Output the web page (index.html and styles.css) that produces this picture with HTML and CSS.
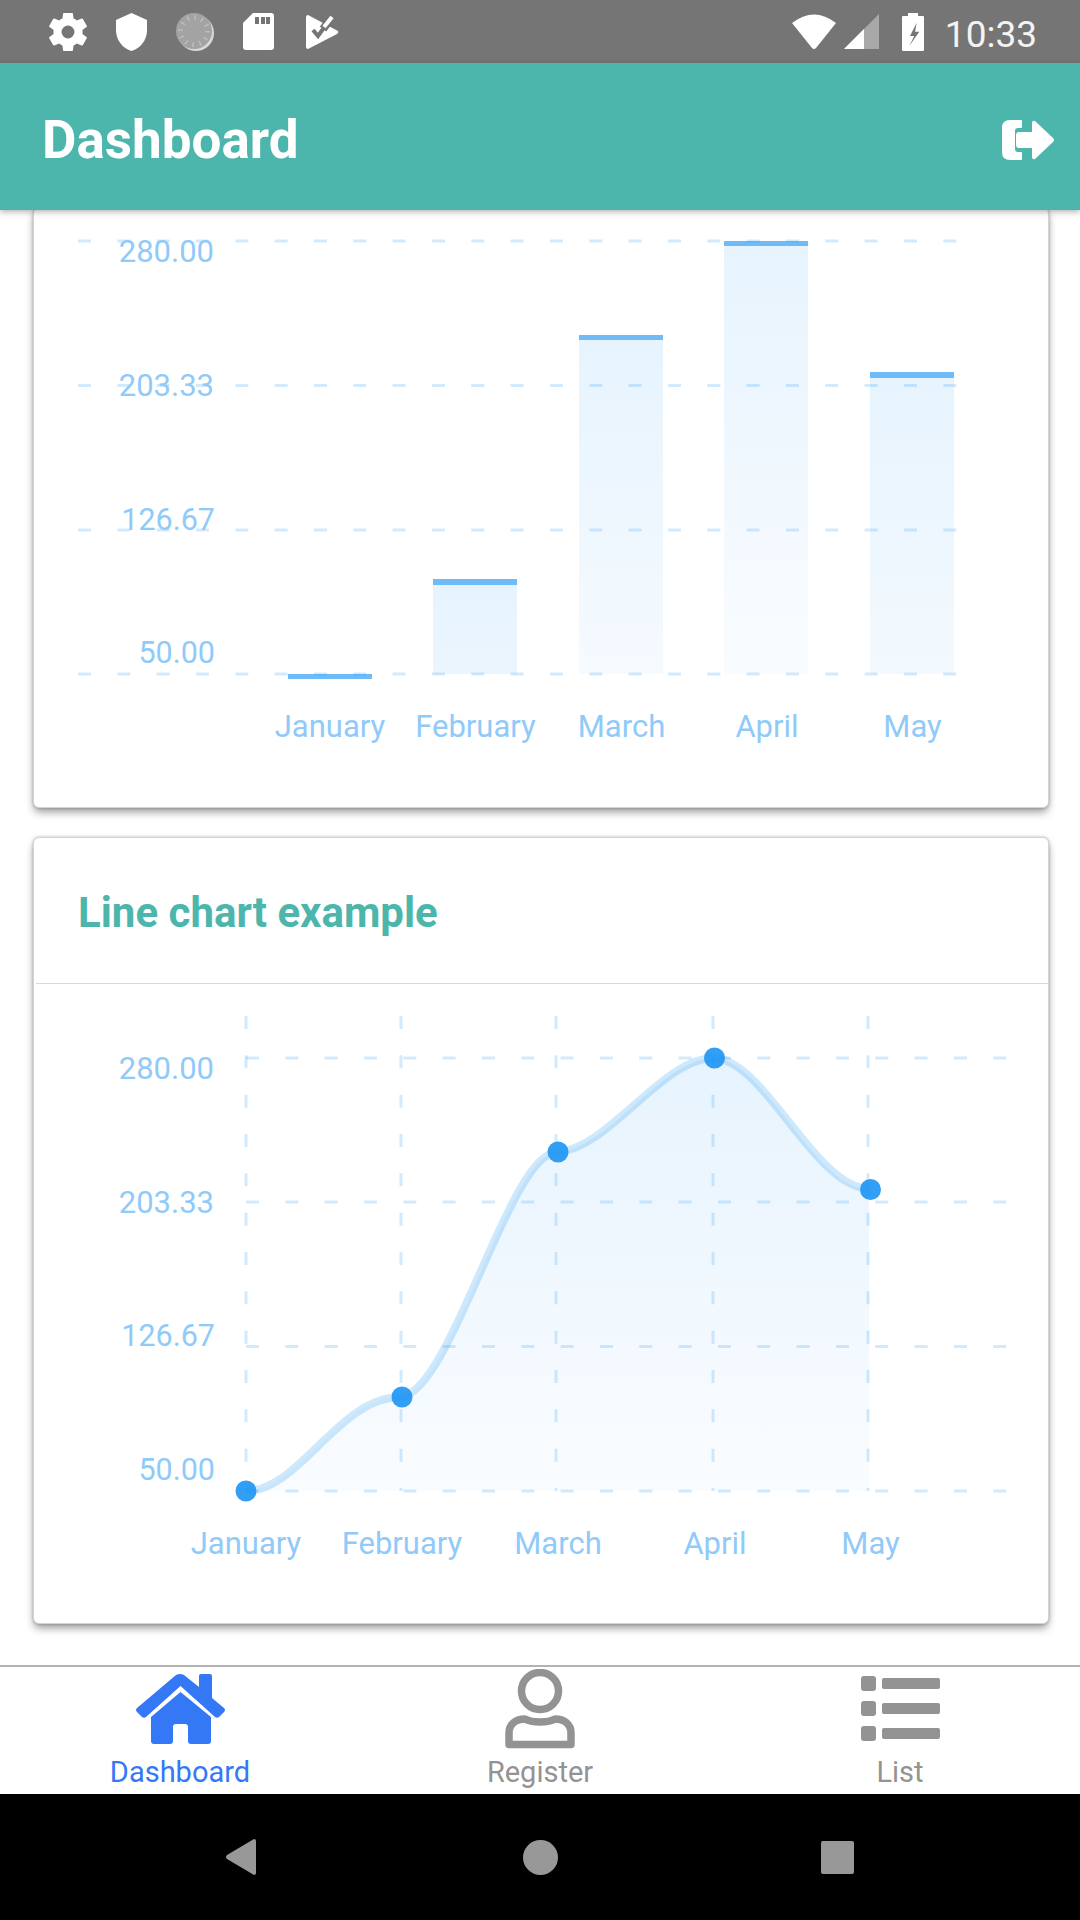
FILE: index.html
```html
<!DOCTYPE html>
<html lang="en">
<head>
    <meta charset="UTF-8">
    <meta name="viewport" content="width=device-width, initial-scale=1.0">
    <title>Dashboard</title>
    <link rel="stylesheet" href="styles.css">
</head>
<body>
    <div class="status-bar">
        <svg class="icon-gear" viewBox="2.6 2.6 18.8 18.8"><path fill-rule="evenodd" d="M19.14 12.94c.04-.3.06-.61.06-.94 0-.32-.02-.64-.07-.94l2.03-1.58a.49.49 0 0 0 .12-.61l-1.92-3.32a.488.488 0 0 0-.59-.22l-2.39.96c-.5-.38-1.03-.7-1.62-.94l-.36-2.54a.484.484 0 0 0-.48-.41h-3.84c-.24 0-.43.17-.47.41l-.36 2.54c-.59.24-1.13.57-1.62.94l-2.39-.96c-.22-.08-.47 0-.59.22L2.74 8.87c-.12.21-.08.47.12.61l2.03 1.58c-.05.3-.09.63-.09.94s.02.64.07.94l-2.03 1.58a.49.49 0 0 0-.12.61l1.92 3.32c.12.22.37.29.59.22l2.39-.96c.5.38 1.03.7 1.62.94l.36 2.54c.05.24.24.41.48.41h3.84c.24 0 .44-.17.47-.41l.36-2.54c.59-.24 1.13-.56 1.62-.94l2.39.96c.22.08.47 0 .59-.22l1.92-3.32c.12-.22.07-.47-.12-.61l-2.01-1.58zM12 15.2a3.2 3.2 0 1 1 0-6.4 3.2 3.2 0 0 1 0 6.4z"/></svg>
        <svg class="icon-shield" viewBox="3 1 18 22"><path d="M12 1 3 5v6c0 5.55 3.84 10.74 9 12 5.16-1.26 9-6.45 9-12V5l-9-4z"/></svg>
        <svg class="icon-sync" viewBox="0 0 38 38">
            <circle class="sync-edge" cx="20" cy="20" r="18"/>
            <circle class="sync-disc" cx="18" cy="18" r="18"/>
            <circle class="sync-ticks" cx="18" cy="18" r="13.5"/>
        </svg>
        <svg class="icon-sd" viewBox="0 0 31 37">
            <path d="M10 0H28Q31 0 31 3V34Q31 37 28 37H3Q0 37 0 34V10Z"/>
            <rect class="cut" x="12" y="4" width="4" height="7"/>
            <rect class="cut" x="18" y="4" width="4" height="7"/>
            <rect class="cut" x="23" y="4" width="4" height="7"/>
        </svg>
        <svg class="icon-play" viewBox="0 0 33 34">
            <path d="M2 0L32 16Q33 18 31 19L2 34Q0 34 0 32V2Q0 0 2 0Z"/>
            <polyline class="check-cut" points="7,15 12,21 25,3"/>
            <line class="check-gap" x1="17" y1="14" x2="27" y2="1"/>
            <line class="check-tip" x1="18" y1="12" x2="26" y2="2"/>
        </svg>
        <div class="status-right">
            <svg class="icon-wifi" viewBox="0 0 44 36"><path d="M0 9Q22-8 44 9L24 34Q22 36 20 34Z"/></svg>
            <svg class="icon-signal" viewBox="0 0 35 35">
                <path class="signal-empty" d="M35 0V35H0Z"/>
                <path d="M20 15V35H0Z"/>
            </svg>
            <svg class="icon-battery" viewBox="0 0 22 38">
                <path d="M6 0H16V3H21Q22 3 22 4V37Q22 38 21 38H1Q0 38 0 37V4Q0 3 1 3H6Z"/>
                <path class="cut" d="M14.7 9.7L8 23H12.3L7.3 33L17.3 18.7H13Z"/>
            </svg>
            <span class="clock">10:33</span>
        </div>
    </div>

    <header class="app-header">
        <h1>Dashboard</h1>
        <svg class="icon-logout" viewBox="0 0 52 40">
            <path d="M8 0H19Q20 0 20 1V7Q20 8 19 8H16Q13 8 13 11V29Q13 32 16 32H19Q20 32 20 33V39Q20 40 19 40H8Q0 40 0 32V8Q0 0 8 0Z"/>
            <path d="M14 15Q14 12 17 12H30V3Q30 0 33 1L51 18Q53 20 51 22L33 39Q30 40 30 37V28H17Q14 28 14 25Z"/>
        </svg>
    </header>

    <main class="content">
        <section class="card">
            <svg class="chart chart-bar" viewBox="34 208 1014 599">
                <defs>
                    <linearGradient id="barFeb" gradientUnits="userSpaceOnUse" x1="0" y1="585" x2="0" y2="1018"><stop offset="0" stop-color="#2196f3" stop-opacity="0.11"/><stop offset="1" stop-color="#2196f3" stop-opacity="0.025"/></linearGradient>
                    <linearGradient id="barMar" gradientUnits="userSpaceOnUse" x1="0" y1="340" x2="0" y2="773"><stop offset="0" stop-color="#2196f3" stop-opacity="0.11"/><stop offset="1" stop-color="#2196f3" stop-opacity="0.025"/></linearGradient>
                    <linearGradient id="barApr" gradientUnits="userSpaceOnUse" x1="0" y1="246" x2="0" y2="679"><stop offset="0" stop-color="#2196f3" stop-opacity="0.11"/><stop offset="1" stop-color="#2196f3" stop-opacity="0.025"/></linearGradient>
                    <linearGradient id="barMay" gradientUnits="userSpaceOnUse" x1="0" y1="378" x2="0" y2="811"><stop offset="0" stop-color="#2196f3" stop-opacity="0.11"/><stop offset="1" stop-color="#2196f3" stop-opacity="0.025"/></linearGradient>
                </defs>
                <line class="grid" x1="78" y1="241" x2="958" y2="241"/>
                <line class="grid" x1="78" y1="385.5" x2="958" y2="385.5"/>
                <line class="grid" x1="78" y1="530" x2="958" y2="530"/>
                <line class="grid" x1="78" y1="674" x2="958" y2="674"/>

                <rect class="bar-cap" x="288" y="674" width="84" height="5"/>
                <rect fill="url(#barFeb)" x="433" y="585" width="84" height="89"/>
                <rect class="bar-cap" x="433" y="579" width="84" height="6"/>
                <rect fill="url(#barMar)" x="579" y="340" width="84" height="334"/>
                <rect class="bar-cap" x="579" y="335" width="84" height="5"/>
                <rect fill="url(#barApr)" x="724" y="246" width="84" height="428"/>
                <rect class="bar-cap" x="724" y="241" width="84" height="5"/>
                <rect fill="url(#barMay)" x="870" y="378" width="84" height="296"/>
                <rect class="bar-cap" x="870" y="372" width="84" height="6"/>

                <text class="axis-y" x="214" y="262">280.00</text>
                <text class="axis-y" x="214" y="396">203.33</text>
                <text class="axis-y narrow" x="215" y="530">126.67</text>
                <text class="axis-y narrow" x="215" y="663">50.00</text>

                <text class="axis-x" x="330" y="737">January</text>
                <text class="axis-x" x="475.500" y="737">February</text>
                <text class="axis-x" x="621.500" y="737">March</text>
                <text class="axis-x" x="767" y="737">April</text>
                <text class="axis-x" x="912.500" y="737">May</text>
            </svg>
        </section>

        <section class="card">
            <div class="card-header"><span>Line chart example</span></div>
            <svg class="chart chart-line" viewBox="34 984 1014 639">
                <defs>
                    <linearGradient id="areaFill" gradientUnits="userSpaceOnUse" x1="0" y1="1058" x2="0" y2="1491"><stop offset="0" stop-color="#2196f3" stop-opacity="0.11"/><stop offset="1" stop-color="#2196f3" stop-opacity="0.025"/></linearGradient>
                </defs>
                <line class="grid" x1="246" y1="1058" x2="1008" y2="1058"/>
                <line class="grid" x1="246" y1="1202" x2="1008" y2="1202"/>
                <line class="grid" x1="246" y1="1346.5" x2="1008" y2="1346.5"/>
                <line class="grid" x1="246" y1="1491" x2="1008" y2="1491"/>
                <line class="grid" x1="246" y1="1016" x2="246" y2="1491"/>
                <line class="grid" x1="401" y1="1016" x2="401" y2="1491"/>
                <line class="grid" x1="556" y1="1016" x2="556" y2="1491"/>
                <line class="grid" x1="713" y1="1016" x2="713" y2="1491"/>
                <line class="grid" x1="868" y1="1016" x2="868" y2="1491"/>

                <path fill="url(#areaFill)" d="M246 1491C300 1491 340 1395 402 1397C454 1386 510 1150 558 1152C610 1148 662 1058 714 1058C766 1060 815 1190 869 1189V1491Z"/>
                <path class="curve" d="M246 1491C300 1491 340 1395 402 1397C454 1386 510 1150 558 1152C610 1148 662 1058 714 1058C766 1060 815 1190 871 1189"/>

                <circle class="point" cx="246" cy="1491" r="10.5"/>
                <circle class="point" cx="402" cy="1397" r="10.5"/>
                <circle class="point" cx="558" cy="1152" r="10.5"/>
                <circle class="point" cx="714.5" cy="1058" r="10.5"/>
                <circle class="point" cx="870.5" cy="1189.5" r="10.5"/>

                <text class="axis-y" x="214" y="1079">280.00</text>
                <text class="axis-y" x="214" y="1213">203.33</text>
                <text class="axis-y narrow" x="215" y="1346">126.67</text>
                <text class="axis-y narrow" x="215" y="1480">50.00</text>

                <text class="axis-x" x="246" y="1554">January</text>
                <text class="axis-x" x="402" y="1554">February</text>
                <text class="axis-x" x="558" y="1554">March</text>
                <text class="axis-x" x="715" y="1554">April</text>
                <text class="axis-x" x="870.500" y="1554">May</text>
            </svg>
        </section>
    </main>

    <nav class="tab-bar">
        <div class="tab active">
            <div class="tab-icon">
                <svg class="icon-home" viewBox="0 0 89 70">
                    <path d="M40 1Q44-1 48 1L63 13V2Q63 0 65 0H74Q76 0 76 2V24L88 34Q90 36 88 38L83 43Q81 44.500 79 43L44.500 12L10 43Q8 44.500 6 43L1 38Q-1 36 1 34Z"/>
                    <path d="M44.500 18L75 43V67Q75 70 72 70H55Q52 70 52 67V53Q52 50 49 50H40Q37 50 37 53V67Q37 70 34 70H18Q15 70 15 67V43Z"/>
                </svg>
            </div>
            <span class="tab-label">Dashboard</span>
        </div>
        <div class="tab">
            <div class="tab-icon">
                <svg class="icon-person" viewBox="0 0 70 80">
                    <circle cx="35" cy="22" r="18.500"/>
                    <path d="M4 75.500V64C4 55 11 50 20 50C27 54 43 54 50 50C59 50 66 55 66 64V75.500Z"/>
                </svg>
            </div>
            <span class="tab-label">Register</span>
        </div>
        <div class="tab">
            <div class="tab-icon">
                <svg class="icon-list" viewBox="0 0 79 65">
                    <rect x="0" y="0" width="15" height="15" rx="3"/>
                    <rect x="21" y="2" width="58" height="11" rx="2"/>
                    <rect x="0" y="25" width="15" height="15" rx="3"/>
                    <rect x="21" y="27" width="58" height="11" rx="2"/>
                    <rect x="0" y="50" width="15" height="15" rx="3"/>
                    <rect x="21" y="52" width="58" height="11" rx="2"/>
                </svg>
            </div>
            <span class="tab-label">List</span>
        </div>
    </nav>

    <div class="nav-bar">
        <svg class="nav-back" viewBox="0 0 30 36"><path d="M28 0Q30 0 30 2V34Q30 36 28 36L1 20Q-1 18 1 16Z"/></svg>
        <div class="nav-home"></div>
        <div class="nav-recent"></div>
    </div>
</body>
</html>
```

FILE: styles.css
```css
* {
    box-sizing: border-box;
}
body {
    font-family: Roboto, Arial, sans-serif;
    background-color: #fff;
    margin: 0;
    padding: 0;
    height: 1920px;
    display: flex;
    flex-direction: column;
    overflow: hidden;
}

/* status bar */
.status-bar {
    height: 63px;
    flex: none;
    background-color: #757575;
    display: flex;
    align-items: center;
    gap: 29px;
    padding: 0 43px 0 49px;
}
.status-bar svg {
    fill: #fff;
    flex: none;
    display: block;
}
.icon-gear { width: 38px; height: 38px; }
.icon-shield { width: 31px; height: 38px; }
.icon-sync { width: 38px; height: 38px; }
.icon-sd { width: 31px; height: 37px; }
.icon-play { width: 33px; height: 34px; margin-left: 3px; }
.status-bar .cut { fill: #757575; }
.sync-edge { fill: #d8d8d8; }
.sync-disc { fill: #a3a3a3; }
.sync-ticks {
    fill: none;
    stroke: #bdbdbd;
    stroke-width: 5;
    stroke-dasharray: 1.5 5.57;
}
.check-cut, .check-gap, .check-tip { fill: none; }
.check-cut { stroke: #757575; stroke-width: 4; }
.check-gap { stroke: #757575; stroke-width: 8; }
.check-tip { stroke: #fff; stroke-width: 4; }
.status-right {
    margin-left: auto;
    display: flex;
    align-items: center;
}
.icon-wifi { width: 44px; height: 36px; margin-right: 8px; }
.icon-signal { width: 35px; height: 35px; margin-right: 23px; }
.signal-empty { fill: #a8a8a8; }
.icon-battery { width: 22px; height: 38px; margin-right: 21px; }
.clock {
    font-size: 37px;
    color: #f4f4f4;
    line-height: 63px;
    padding-top: 5px;
}

/* header */
.app-header {
    height: 147px;
    flex: none;
    z-index: 2;
    background-color: #4db6ac;
    box-shadow: 0 2px 6px rgba(0, 0, 0, 0.3);
    display: flex;
    align-items: center;
    justify-content: space-between;
    padding: 7px 26px 0 42px;
}
.app-header h1 {
    margin: 0;
    color: #fff;
    font-size: 53px;
    font-weight: 700;
}
.icon-logout {
    width: 52px;
    height: 40px;
    fill: #fff;
}

/* cards */
.content {
    flex: 1;
    min-height: 0;
    overflow: hidden;
    display: flex;
    flex-direction: column;
    justify-content: flex-end;
    gap: 29px;
    padding: 0 31px 41px 33px;
}
.card {
    flex: none;
    background-color: #fff;
    border: 1px solid #d4d4d4;
    border-radius: 6px;
    box-shadow: 0 5px 8px -1px rgba(0, 0, 0, 0.4), 0 0 3px rgba(0, 0, 0, 0.25);
}
.card-header {
    height: 146px;
    border-bottom: 1px solid #d9d9d9;
    margin-left: 2px;
    padding: 4px 0 0 42px;
    display: flex;
    align-items: center;
    color: #4db6ac;
    font-size: 42px;
    font-weight: 700;
}
.chart {
    display: block;
    width: 1014px;
}
.chart-bar { height: 599px; }
.chart-line { height: 639px; }

.grid {
    stroke: #2196f3;
    stroke-opacity: 0.2;
    stroke-width: 3;
    stroke-dasharray: 13 26.33;
}
.bar-cap {
    fill: #2196f3;
    fill-opacity: 0.65;
}
.curve {
    fill: none;
    stroke: #2196f3;
    stroke-opacity: 0.22;
    stroke-width: 8;
}
.point {
    fill: #2196f3;
    fill-opacity: 0.92;
}
.axis-y, .axis-x {
    font-size: 31px;
    fill: #90caf9;
}
.axis-y { text-anchor: end; }
.axis-y.narrow { font-size: 30.5px; }
.axis-x { text-anchor: middle; }

/* tabs */
.tab-bar {
    height: 129px;
    flex: none;
    display: flex;
    background-color: #fff;
    border-top: 2px solid #b2b2b2;
}
.tab {
    flex: 1;
    display: flex;
    flex-direction: column;
    align-items: center;
    padding-top: 1px;
    color: #939393;
}
.tab-icon {
    height: 81px;
    display: flex;
    align-items: center;
}
.tab-label {
    margin-top: 7px;
    font-size: 29px;
    line-height: 32px;
}
.tab.active { color: #3578f6; }
.icon-home { width: 89px; height: 70px; fill: #3578f6; }
.icon-person {
    width: 70px;
    height: 80px;
    fill: none;
    stroke: #939393;
    stroke-width: 7.5;
    stroke-linejoin: round;
}
.icon-list { width: 79px; height: 65px; fill: #939393; }

/* android nav */
.nav-bar {
    height: 126px;
    flex: none;
    background-color: #000;
    display: flex;
    align-items: center;
    justify-content: center;
}
.nav-back { width: 30px; height: 36px; fill: #989898; }
.nav-home {
    width: 35px;
    height: 35px;
    margin: 0 263px 0 267px;
    border-radius: 50%;
    background-color: #989898;
}
.nav-recent {
    width: 33px;
    height: 33px;
    border-radius: 2px;
    background-color: #989898;
}
```
